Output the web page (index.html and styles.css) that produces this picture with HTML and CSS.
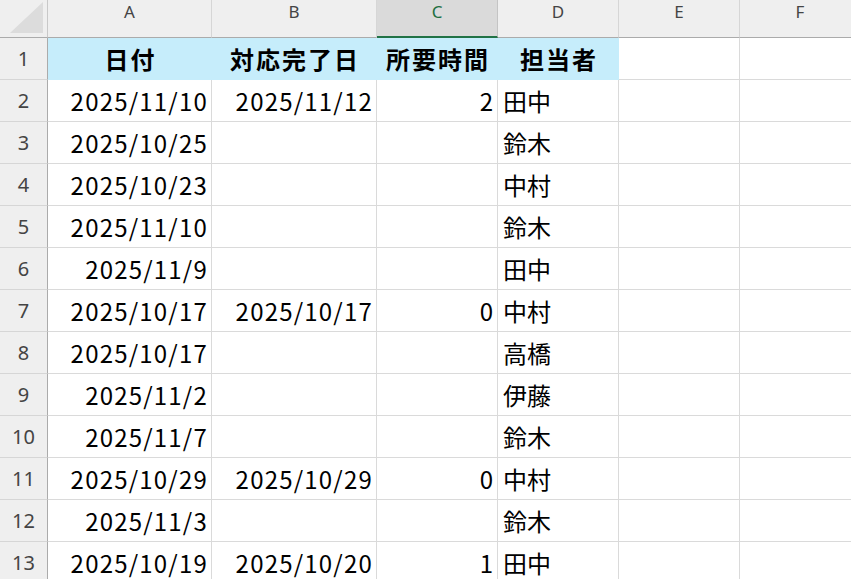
FILE: index.html
```html
<!DOCTYPE html>
<html lang="ja">
<head>
<meta charset="utf-8">
<link rel="stylesheet" href="styles.css">
</head>
<body>
<div class="sheet">
  <div class="corner"><svg class="tri" width="48" height="37" viewBox="0 0 48 37"><polygon points="10,33 43,33 43,2" fill="#dcdcdc"/></svg></div>
  <div class="ch">A</div><div class="ch">B</div><div class="ch sel">C</div><div class="ch">D</div><div class="ch">E</div><div class="ch">F</div>

  <div class="rh">1</div>
  <div class="c hd">日付</div><div class="c hd">対応完了日</div><div class="c hd">所要時間</div><div class="c hd">担当者</div><div class="c"></div><div class="c"></div>

  <div class="rh">2</div>
  <div class="c r d">2025/11/10</div><div class="c r d">2025/11/12</div><div class="c r">2</div><div class="c l">田中</div><div class="c"></div><div class="c"></div>

  <div class="rh">3</div>
  <div class="c r d">2025/10/25</div><div class="c"></div><div class="c"></div><div class="c l">鈴木</div><div class="c"></div><div class="c"></div>

  <div class="rh">4</div>
  <div class="c r d">2025/10/23</div><div class="c"></div><div class="c"></div><div class="c l">中村</div><div class="c"></div><div class="c"></div>

  <div class="rh">5</div>
  <div class="c r d">2025/11/10</div><div class="c"></div><div class="c"></div><div class="c l">鈴木</div><div class="c"></div><div class="c"></div>

  <div class="rh">6</div>
  <div class="c r d">2025/11/9</div><div class="c"></div><div class="c"></div><div class="c l">田中</div><div class="c"></div><div class="c"></div>

  <div class="rh">7</div>
  <div class="c r d">2025/10/17</div><div class="c r d">2025/10/17</div><div class="c r">0</div><div class="c l">中村</div><div class="c"></div><div class="c"></div>

  <div class="rh">8</div>
  <div class="c r d">2025/10/17</div><div class="c"></div><div class="c"></div><div class="c l">高橋</div><div class="c"></div><div class="c"></div>

  <div class="rh">9</div>
  <div class="c r d">2025/11/2</div><div class="c"></div><div class="c"></div><div class="c l">伊藤</div><div class="c"></div><div class="c"></div>

  <div class="rh">10</div>
  <div class="c r d">2025/11/7</div><div class="c"></div><div class="c"></div><div class="c l">鈴木</div><div class="c"></div><div class="c"></div>

  <div class="rh">11</div>
  <div class="c r d">2025/10/29</div><div class="c r d">2025/10/29</div><div class="c r">0</div><div class="c l">中村</div><div class="c"></div><div class="c"></div>

  <div class="rh">12</div>
  <div class="c r d">2025/11/3</div><div class="c"></div><div class="c"></div><div class="c l">鈴木</div><div class="c"></div><div class="c"></div>

  <div class="rh">13</div>
  <div class="c r d">2025/10/19</div><div class="c r d">2025/10/20</div><div class="c r">1</div><div class="c l">田中</div><div class="c"></div><div class="c"></div>
</div>
</body>
</html>
```

FILE: styles.css
```css
html, body {
  margin: 0;
  padding: 0;
  background: #ffffff;
  overflow: hidden;
}

.sheet {
  display: grid;
  grid-template-columns: 48px 164px 165px 121px 121px 121px 121px;
  grid-template-rows: 38px repeat(13, 42px);
  width: 860px;
  font-family: "Noto Sans CJK JP", "Noto Sans", sans-serif;
}

.corner {
  background: #efefef;
  border-right: 1px solid #c8c8c8;
  border-bottom: 1px solid #ababab;
  box-sizing: border-box;
  position: relative;
}

.tri {
  position: absolute;
  left: 0;
  top: 0;
}

.ch {
  background: #efefef;
  border-right: 1px solid #d6d6d6;
  border-bottom: 1px solid #ababab;
  box-sizing: border-box;
  font-family: "Noto Sans", "Open Sans", sans-serif;
  font-size: 17px;
  line-height: 24px;
  color: #444444;
  text-align: center;
}

.ch.sel {
  background: #dadada;
  color: #1e6e42;
  border-bottom: 2px solid #217346;
  border-right-color: #c4c4c4;
}

.rh {
  background: #efefef;
  border-right: 1px solid #ababab;
  border-bottom: 1px solid #d6d6d6;
  box-sizing: border-box;
  font-family: "Noto Sans", "Open Sans", sans-serif;
  font-size: 20px;
  color: #444444;
  display: flex;
  align-items: center;
  justify-content: center;
}

.c {
  border-right: 1px solid #dadada;
  border-bottom: 1px solid #dadada;
  box-sizing: border-box;
  font-size: 24px;
  color: #000000;
  display: flex;
  align-items: center;
  white-space: nowrap;
  overflow: hidden;
}

.c.hd {
  background: #c6edfb;
  border-right-color: #c6edfb;
  border-bottom-color: #c6edfb;
  font-weight: bold;
  justify-content: center;
  letter-spacing: 2px;
  padding-left: 2px;
}

.c.r {
  justify-content: flex-end;
  padding-right: 4px;
}

.c.d {
  letter-spacing: 1.2px;
  padding-right: 3px;
}

.c.l {
  justify-content: flex-start;
  padding-left: 5px;
}
```
